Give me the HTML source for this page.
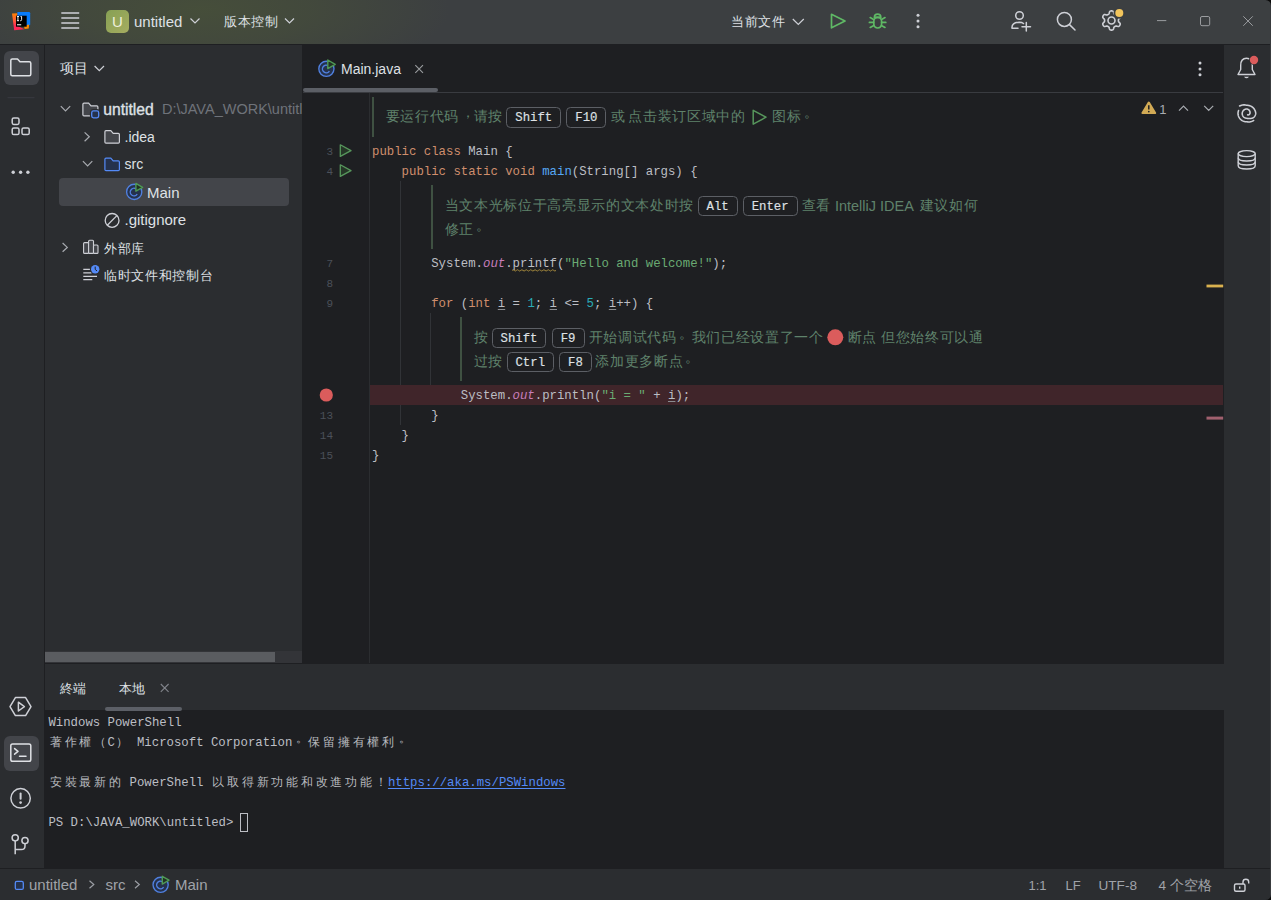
<!DOCTYPE html>
<html><head><meta charset="utf-8">
<style>
*{box-sizing:border-box;margin:0;padding:0}
html,body{width:1271px;height:900px;overflow:hidden;background:#1e1f22}
body{position:relative;font-family:"Liberation Sans",sans-serif;color:#dfe1e5;font-size:14px}
.a{position:absolute}
svg{position:absolute;overflow:visible}
.t{position:absolute;white-space:nowrap;line-height:1}
.mono{font-family:"Liberation Mono",monospace}
.c{font-size:12.33px;color:#bcbec4}
.k{color:#cf8e6d}.fn{color:#56a8f5}.sf{color:#c77dbb;font-style:italic}.s{color:#6aab73}.n{color:#2aacb8}
.u{text-decoration:underline;text-decoration-color:#8a8c90;text-underline-offset:2px}
.ln{font-size:11px;color:#4b5059}
.kbd{border:1.5px solid #5c5f65;border-radius:4.5px}
.kt{font-size:12.33px;color:#dfe1e5;-webkit-text-stroke:0.15px #dfe1e5}
.doc{color:#5f826b;font-size:13.6px;letter-spacing:0.67px}
.p{position:relative;top:-4px;left:2px}
.lat{letter-spacing:0;font-size:14.5px}
.term{font-size:12.33px;color:#bcbec4;white-space:pre}
.w{display:inline-block;width:14.76px;text-align:center;font-size:11.8px;color:#b8babf}
.lnk{color:#548af7;text-decoration:underline;text-underline-offset:2px}
.st{color:#a0a3a9}


</style></head><body>

<!-- TITLE BAR -->
<div class="a" style="left:0;top:0;width:1271px;height:44px;background:#3c3f41"></div>
<div class="a" style="left:0;top:0;width:700px;height:44px;background:radial-gradient(ellipse 250px 75px at 200px 10px,rgba(92,112,42,0.30) 0%,rgba(92,112,42,0.20) 45%,rgba(92,112,42,0) 100%)"></div>
<div class="a" style="left:0;top:44px;width:1271px;height:1px;background:#1e1f22"></div>
<!-- logo -->
<svg style="left:0;top:0" width="44" height="44">
 <defs><linearGradient id="lg1" x1="0" y1="0" x2="0" y2="1"><stop offset="0" stop-color="#ff8100"/><stop offset="0.45" stop-color="#ff5a3a"/><stop offset="0.75" stop-color="#fe2857"/><stop offset="1" stop-color="#fe2857"/></linearGradient></defs>
 <path d="M12 13.6 L17.6 13.2 L17.6 26 L24.6 29.2 L14.2 30.2 Z" fill="url(#lg1)"/>
 <path d="M17.4 12 H28.9 Q30.2 12 30.2 13.3 V24.8 L26.7 26.7 L17.4 17 Z" fill="#087cfa"/>
 <path d="M24 25.4 L29.1 24.6 L28.7 28.5 L24.6 29.1 Z" fill="#ff8a00"/>
 <rect x="16" y="15.7" width="10.7" height="11" fill="#000"/>
 <path d="M16.9 16.5 H19 M17.95 16.5 V20.7 M16.9 20.7 H19" stroke="#fff" stroke-width="0.95" fill="none"/>
 <path d="M20.5 16.5 H21.6 V19.7 Q21.6 20.7 20.6 20.7 H20.1" stroke="#fff" stroke-width="0.95" fill="none"/>
 <rect x="17" y="24" width="4.2" height="1.4" fill="#bdbdbd"/>
</svg>
<!-- hamburger -->
<svg style="left:0;top:0" width="100" height="44"><path d="M61.3 13 H79.2 M61.3 18 H79.2 M61.3 23 H79.2 M61.3 28 H79.2" stroke="#ced0d6" stroke-width="1.5"/></svg>
<!-- U badge -->
<div class="a" style="left:106px;top:10px;width:23px;height:23px;border-radius:5px;background:linear-gradient(135deg,#86a054,#a6ad60)"></div>
<div class="t" style="left:106px;top:14px;width:23px;text-align:center;font-size:15px;color:#eef0dc">U</div>
<div class="t" style="left:134px;top:13.5px;font-size:15px;color:#dfe1e5">untitled</div>
<svg style="left:0;top:0" width="300" height="44"><path d="M190.5 18.5 L195 23 L199.5 18.5" stroke="#ced0d6" stroke-width="1.2" fill="none"/><path d="M285 18.5 L289.5 23 L294 18.5" stroke="#ced0d6" stroke-width="1.2" fill="none"/></svg>
<div class="t" style="left:224px;top:15.3px;font-size:13px;letter-spacing:0.55px;color:#dfe1e5">版本控制</div>
<div class="t" style="left:731px;top:15.3px;font-size:13px;letter-spacing:0.55px;color:#dfe1e5">当前文件</div>
<svg style="left:0;top:0" width="1271" height="44">
 <path d="M792.8 19 L798.3 24.5 L803.8 19" stroke="#ced0d6" stroke-width="1.2" fill="none"/>
 <path d="M831.5 14.3 L845 21 L831.5 27.8 Z" stroke="#5fb865" stroke-width="1.7" stroke-linejoin="round" fill="none"/>
 <g stroke="#5fb865" stroke-width="1.7" fill="none" stroke-linecap="round">
  <path d="M874.4 17.4 a3.2 3.2 0 0 1 6.4 0 Z"/>
  <rect x="873.8" y="17.4" width="7.8" height="10.6" rx="3.9"/>
  <path d="M870.2 17.6 L873.6 19.4 M869.4 22.4 H873.6 M870.2 27.4 L873.8 25.4 M885 17.6 L881.6 19.4 M885.8 22.4 H881.6 M885 27.4 L881.4 25.4"/>
 </g>
 <circle cx="918" cy="15.2" r="1.5" fill="#ced0d6"/><circle cx="918" cy="21" r="1.5" fill="#ced0d6"/><circle cx="918" cy="26.8" r="1.5" fill="#ced0d6"/>
 <g stroke="#ced0d6" stroke-width="1.5" fill="none" stroke-linecap="round">
  <circle cx="1019.5" cy="15.5" r="3.8"/>
  <path d="M1012 28.2 H1018 M1012 28.2 Q1011.5 22.5 1019.3 22.2 Q1022 22.2 1023.5 23.5"/>
  <path d="M1026.3 22.6 V31 M1022 26.8 H1030.5"/>
  <circle cx="1064.4" cy="19.4" r="7"/>
  <path d="M1069.5 24.6 L1075 30"/>
 </g>
 <g transform="translate(1111.5 20.5)" stroke="#ced0d6" stroke-width="1.6" fill="none">
  <path d="M6.90 -0.00 L6.90 -0.30 L6.92 -0.61 L6.97 -0.92 L7.12 -1.26 L7.45 -1.65 L7.97 -2.14 L8.46 -2.67 L8.71 -3.17 L8.75 -3.62 L8.66 -4.04 L8.51 -4.43 L8.31 -4.80 L8.09 -5.15 L7.83 -5.48 L7.51 -5.76 L7.10 -5.96 L6.54 -5.99 L5.83 -5.83 L5.15 -5.63 L4.65 -5.54 L4.28 -5.58 L3.98 -5.69 L3.71 -5.83 L3.45 -5.98 L3.19 -6.13 L2.94 -6.29 L2.69 -6.50 L2.47 -6.79 L2.29 -7.28 L2.14 -7.97 L1.92 -8.66 L1.61 -9.13 L1.24 -9.39 L0.83 -9.52 L0.42 -9.58 L0.00 -9.60 L-0.42 -9.58 L-0.83 -9.52 L-1.24 -9.39 L-1.61 -9.13 L-1.92 -8.66 L-2.14 -7.97 L-2.29 -7.28 L-2.47 -6.79 L-2.69 -6.50 L-2.94 -6.29 L-3.19 -6.13 L-3.45 -5.98 L-3.71 -5.83 L-3.98 -5.69 L-4.28 -5.58 L-4.65 -5.54 L-5.15 -5.63 L-5.83 -5.83 L-6.54 -5.99 L-7.10 -5.96 L-7.51 -5.76 L-7.83 -5.48 L-8.09 -5.15 L-8.31 -4.80 L-8.51 -4.43 L-8.66 -4.04 L-8.75 -3.62 L-8.71 -3.17 L-8.46 -2.67 L-7.97 -2.14 L-7.45 -1.65 L-7.12 -1.26 L-6.97 -0.92 L-6.92 -0.61 L-6.90 -0.30 L-6.90 -0.00 L-6.90 0.30 L-6.92 0.61 L-6.97 0.92 L-7.12 1.26 L-7.45 1.65 L-7.97 2.14 L-8.46 2.67 L-8.71 3.17 L-8.75 3.62 L-8.66 4.04 L-8.51 4.43 L-8.31 4.80 L-8.09 5.15 L-7.83 5.48 L-7.51 5.76 L-7.10 5.96 L-6.54 5.99 L-5.83 5.83 L-5.15 5.63 L-4.65 5.54 L-4.28 5.58 L-3.98 5.69 L-3.71 5.83 L-3.45 5.98 L-3.19 6.13 L-2.94 6.29 L-2.69 6.50 L-2.47 6.79 L-2.29 7.28 L-2.14 7.97 L-1.92 8.66 L-1.61 9.13 L-1.24 9.39 L-0.83 9.52 L-0.42 9.58 L-0.00 9.60 L0.42 9.58 L0.83 9.52 L1.24 9.39 L1.61 9.13 L1.92 8.66 L2.14 7.97 L2.29 7.28 L2.47 6.79 L2.69 6.50 L2.94 6.29 L3.19 6.13 L3.45 5.98 L3.71 5.83 L3.98 5.69 L4.28 5.58 L4.65 5.54 L5.15 5.63 L5.83 5.83 L6.54 5.99 L7.10 5.96 L7.51 5.76 L7.83 5.48 L8.09 5.15 L8.31 4.80 L8.51 4.43 L8.66 4.04 L8.75 3.62 L8.71 3.17 L8.46 2.67 L7.97 2.14 L7.45 1.65 L7.12 1.26 L6.97 0.92 L6.92 0.61 L6.90 0.30 Z" stroke-linejoin="round"/>
  <circle r="3.5"/>
 </g>
 <circle cx="1119.3" cy="13" r="5.8" fill="#3c3f41"/>
 <circle cx="1119.3" cy="13" r="4" fill="#f2c55c"/>
 <g stroke="#9a9c9f" stroke-width="1" fill="none">
  <path d="M1157 20.6 H1166.3"/>
  <rect x="1200.5" y="16.5" width="9.2" height="9.2" rx="1.5"/>
  <path d="M1243.3 16.3 L1252.8 25.8 M1252.8 16.3 L1243.3 25.8"/>
 </g>
</svg>


<!-- LEFT STRIP -->
<div class="a" style="left:0;top:45px;width:44px;height:823px;background:#2b2d30"></div>
<div class="a" style="left:44px;top:45px;width:1px;height:823px;background:#1e1f22"></div>

<!-- PROJECT PANEL -->
<div class="a" style="left:45px;top:45px;width:257px;height:618px;background:#2b2d30"></div>
<div class="a" style="left:4px;top:50.5px;width:34.5px;height:34.5px;border-radius:6px;background:#43454a"></div>
<svg style="left:0;top:0" width="45" height="900">
 <g stroke="#dfe1e5" stroke-width="1.5" fill="none" stroke-linejoin="round">
  <path d="M10.8 60.5 Q10.8 59 12.3 59 H17.5 L20 61.8 H29.3 Q30.8 61.8 30.8 63.3 V74.3 Q30.8 75.8 29.3 75.8 H12.3 Q10.8 75.8 10.8 74.3 Z"/>
 </g>
 <path d="M7.5 97.7 H34.5" stroke="#393b40" stroke-width="1"/>
 <g stroke="#ced0d6" stroke-width="1.5" fill="none">
  <rect x="12.2" y="118" width="6.8" height="6.4" rx="1.6"/>
  <rect x="12.2" y="128" width="6.8" height="6.6" rx="1.6"/>
  <rect x="22" y="128" width="7.2" height="6.6" rx="1.6"/>
 </g>
 <circle cx="13.2" cy="172.3" r="1.7" fill="#ced0d6"/><circle cx="20.6" cy="172.3" r="1.7" fill="#ced0d6"/><circle cx="27.9" cy="172.3" r="1.7" fill="#ced0d6"/>
 <g stroke="#ced0d6" stroke-width="1.5" fill="none" stroke-linejoin="round">
  <path d="M15.4 697.6 H25.6 L31 706.6 L25.6 715.6 H15.4 L10 706.6 Z"/>
  <path d="M18.4 702.2 L24.4 706.6 L18.4 711 Z"/>
 </g>
</svg>
<div class="a" style="left:4px;top:736px;width:34.5px;height:34.5px;border-radius:6px;background:#43454a"></div>
<svg style="left:0;top:0" width="45" height="900">
 <g stroke="#dfe1e5" stroke-width="1.5" fill="none" stroke-linejoin="round" stroke-linecap="round">
  <rect x="10.8" y="744" width="20" height="17.2" rx="1.8"/>
  <path d="M14.6 748.6 L18 751.4 L14.6 754.2"/>
  <path d="M19.5 756.3 H26"/>
 </g>
 <g stroke="#ced0d6" stroke-width="1.5" fill="none" stroke-linecap="round">
  <circle cx="20.6" cy="798.3" r="9.7"/>
  <path d="M20.6 793.6 V798.8" stroke-width="2"/>
  <circle cx="15.2" cy="837.8" r="3.1"/>
  <circle cx="25" cy="840.6" r="3.1"/>
  <path d="M15.2 840.9 V854.2 M15.2 849.6 H21.3 Q25 849.6 25 846 V843.7" stroke-linecap="butt"/>
 </g>
 <circle cx="20.6" cy="802.6" r="1.3" fill="#ced0d6"/>
</svg>

<!-- project header & tree -->
<div class="t" style="left:60px;top:61px;font-size:14px;color:#dfe1e5">项目</div>
<svg style="left:0;top:0" width="303" height="300">
 <path d="M94.6 66 L99.3 70.7 L104 66" stroke="#ced0d6" stroke-width="1.2" fill="none"/>
 <g stroke="#a8abb0" stroke-width="1.2" fill="none">
  <path d="M60.8 106.2 L65.5 110.9 L70.2 106.2"/>
  <path d="M84.6 132.4 L89.3 136.8 L84.6 141.2"/>
  <path d="M82.9 161.2 L87.6 165.9 L92.3 161.2"/>
  <path d="M62.6 243 L67.3 247.4 L62.6 251.8"/>
 </g>
 <!-- root folder -->
 <path d="M82.9 104.3 Q82.9 103.2 84 103.2 H88.6 L91 105.9 H96.8 Q97.9 105.9 97.9 107 V114.7 Q97.9 115.8 96.8 115.8 H84 Q82.9 115.8 82.9 114.7 Z" stroke="#ced0d6" stroke-width="1.2" fill="#43454a"/>
 <rect x="91.7" y="110.9" width="7" height="7" rx="1.8" stroke="#2b2d30" stroke-width="3.6" fill="#25324d"/>
 <rect x="91.7" y="110.9" width="7" height="7" rx="1.8" stroke="#548af7" stroke-width="1.3" fill="#25324d"/>
 <!-- .idea folder -->
 <path d="M104.9 131.8 Q104.9 130.7 106 130.7 H110.8 L113.2 133.4 H118.3 Q119.4 133.4 119.4 134.5 V142.1 Q119.4 143.2 118.3 143.2 H106 Q104.9 143.2 104.9 142.1 Z" stroke="#ced0d6" stroke-width="1.2" fill="#43454a"/>
 <!-- src folder -->
 <path d="M104.9 159.3 Q104.9 158.2 106 158.2 H110.8 L113.2 160.9 H118.3 Q119.4 160.9 119.4 162 V169.6 Q119.4 170.7 118.3 170.7 H106 Q104.9 170.7 104.9 169.6 Z" stroke="#548af7" stroke-width="1.2" fill="#25324d"/>
</svg>
<div class="t" style="left:103.2px;top:102.2px;font-size:15.7px;-webkit-text-stroke:0.35px #dfe1e5;color:#dfe1e5">untitled</div>
<div class="t" style="left:162px;top:102px;font-size:14.5px;color:#6f737a;width:140px;overflow:hidden">D:\JAVA_WORK\untitled</div>
<div class="t" style="left:124.5px;top:129.5px;font-size:14px;color:#dfe1e5">.idea</div>
<div class="t" style="left:124.5px;top:157px;font-size:14px;color:#dfe1e5">src</div>
<div class="a" style="left:59px;top:178.3px;width:229.5px;height:27.3px;border-radius:4px;background:#43454a"></div>
<svg style="left:0;top:0" width="303" height="300">
 <circle cx="134.2" cy="191.9" r="7.6" stroke="#5080e0" stroke-width="1.35" fill="#25324d"/>
 <path d="M137.2 194.2 A3.8 3.8 0 1 1 136 188.8" stroke="#5080e0" stroke-width="1.4" fill="none"/>
 <path d="M135.9 183.4 L142.6 187.3 L135.9 191.2 Z" stroke="#4f9a55" stroke-width="1.4" stroke-linejoin="round" fill="#223225"/>
 <!-- gitignore -->
 <circle cx="112.1" cy="220.4" r="6.9" stroke="#ced0d6" stroke-width="1.3" fill="none"/>
 <path d="M107.3 225.2 L116.9 215.6" stroke="#ced0d6" stroke-width="1.3"/>
 <!-- library -->
 <g stroke="#ced0d6" stroke-width="1.1" fill="#43454a">
  <rect x="83.6" y="242.6" width="5" height="10.8" rx="1"/>
  <rect x="88.6" y="240.2" width="4.9" height="13.2" rx="1"/>
  <rect x="93.5" y="245" width="4.5" height="8.4" rx="1"/>
 </g>
 <!-- scratch -->
 <g stroke="#ced0d6" stroke-width="1.3">
  <path d="M83.3 269.3 H89.9 M83.3 272.9 H91.5 M83.3 276.3 H97 M83.3 279.7 H92.3"/>
 </g>
 <circle cx="95.2" cy="269.3" r="5" fill="#2b2d30"/>
 <circle cx="95.2" cy="269.3" r="4.2" fill="#548af7"/>
 <path d="M95.2 266.6 V269.4 L97 271" stroke="#1e1f22" stroke-width="1" fill="none"/>
</svg>
<div class="t" style="left:147px;top:184.5px;font-size:15px;color:#dfe1e5">Main</div>
<div class="t" style="left:124.5px;top:211.6px;font-size:15px;color:#dfe1e5">.gitignore</div>
<div class="t" style="left:104px;top:241.5px;font-size:13px;letter-spacing:0.5px;color:#dfe1e5">外部库</div>
<div class="t" style="left:104px;top:268.8px;font-size:13px;letter-spacing:0.68px;color:#dfe1e5">临时文件和控制台</div>
<!-- project scrollbar -->
<div class="a" style="left:45px;top:651px;width:258px;height:12px;background:#333438"></div>
<div class="a" style="left:45px;top:651.5px;width:230px;height:10.5px;background:#5a5c60"></div>


<!-- EDITOR -->
<div class="a" style="left:302px;top:45px;width:922px;height:618px;background:#1e1f22"></div>
<div class="a" style="left:303px;top:92px;width:920px;height:1px;background:#393b40"></div>
<!-- tab header -->
<svg style="left:0;top:0" width="1271" height="100">
 <circle cx="326.4" cy="68.8" r="7.6" stroke="#5080e0" stroke-width="1.35" fill="#25324d"/>
 <path d="M329.4 71.1 A3.8 3.8 0 1 1 328.2 65.7" stroke="#5080e0" stroke-width="1.4" fill="none"/>
 <path d="M327.8 60 L335.2 64.3 L327.8 68.6 Z" stroke="#4f9a55" stroke-width="1.4" stroke-linejoin="round" fill="#223225"/>
 <path d="M415.3 65.2 L423 72.9 M423 65.2 L415.3 72.9" stroke="#9a9c9f" stroke-width="1.1"/>
 <circle cx="1200" cy="63.1" r="1.5" fill="#ced0d6"/><circle cx="1200" cy="68.9" r="1.5" fill="#ced0d6"/><circle cx="1200" cy="74.7" r="1.5" fill="#ced0d6"/>
</svg>
<div class="t" style="left:341px;top:62px;font-size:14px;color:#dfe1e5">Main.java</div>
<div class="a" style="left:303px;top:88.3px;width:134.5px;height:4px;border-radius:2px;background:#5c5f66"></div>
<!-- gutter separator -->
<div class="a" style="left:369px;top:93px;width:1px;height:570px;background:#2b2d30"></div>
<!-- indent guides -->
<div class="a" style="left:400px;top:181px;width:1px;height:243.5px;background:#313337"></div>
<div class="a" style="left:430px;top:313px;width:1px;height:91.5px;background:#313337"></div>
<!-- breakpoint line -->
<div class="a" style="left:370px;top:384.5px;width:853px;height:20px;background:#40252a"></div>
<!-- doc bars -->
<div class="a" style="left:372px;top:96.5px;width:2px;height:40px;background:#3f5142"></div>
<div class="a" style="left:431px;top:184.5px;width:2px;height:64px;background:#3f5142"></div>
<div class="a" style="left:460px;top:316.8px;width:2px;height:64px;background:#3f5142"></div>
<svg style="left:0;top:0" width="1271" height="500">
 <path d="M340.3 144.8 L351 150.6 L340.3 156.4 Z" stroke="#57965c" stroke-width="1.3" stroke-linejoin="round" fill="#253627"/>
 <path d="M340.3 164.8 L351 170.6 L340.3 176.4 Z" stroke="#57965c" stroke-width="1.3" stroke-linejoin="round" fill="#253627"/>
 <circle cx="326.3" cy="395" r="6.6" fill="#db5c5c"/>
 <path d="M753.2 110.3 L766 117.2 L753.2 124.1 Z" stroke="#57965c" stroke-width="1.5" stroke-linejoin="round" fill="none"/>
 <circle cx="835.3" cy="337.3" r="8" fill="#db5c5c"/>
 <path d="M512 270.4 q1.1 -1.3 2.2 0 t2.2 0 t2.2 0 t2.2 0 t2.2 0 t2.2 0 t2.2 0 t2.2 0 t2.2 0 t2.2 0 t2.2 0 t2.2 0 t2.2 0 t2.2 0 t2.2 0 t2.2 0 t2.2 0 t2.2 0 t2.2 0 t2.2 0" stroke="#b3943f" stroke-width="0.9" fill="none"/>
 <!-- warning -->
 <path d="M1148.8 102.6 L1155.1 113 H1142.5 Z" fill="#d2aa55" stroke="#d2aa55" stroke-width="2.2" stroke-linejoin="round"/>
 <path d="M1148.8 105.2 V109.4" stroke="#1e1f22" stroke-width="1.5"/>
 <circle cx="1148.8" cy="111.6" r="0.85" fill="#1e1f22"/>
 <path d="M1179 110.6 L1183.5 106 L1188 110.6 M1204.2 105.8 L1208.7 110.4 L1213.2 105.8" stroke="#a8abb0" stroke-width="1.2" fill="none"/>
 <rect x="1206.5" y="284.6" width="16.7" height="2.8" fill="#d9b14f"/>
 <rect x="1206.5" y="416.6" width="16.7" height="3" fill="#a0606e"/>
</svg>
<div class="t" style="left:1159.2px;top:102.8px;font-size:13px;color:#a8abb0">1</div>
<div class="t mono ln" style="left:300px;top:147.07px;width:33px;text-align:right">3</div>
<div class="t mono ln" style="left:300px;top:167.07px;width:33px;text-align:right">4</div>
<div class="t mono ln" style="left:300px;top:259.07px;width:33px;text-align:right">7</div>
<div class="t mono ln" style="left:300px;top:279.07px;width:33px;text-align:right">8</div>
<div class="t mono ln" style="left:300px;top:299.07px;width:33px;text-align:right">9</div>
<div class="t mono ln" style="left:300px;top:411.07px;width:33px;text-align:right">13</div>
<div class="t mono ln" style="left:300px;top:431.07px;width:33px;text-align:right">14</div>
<div class="t mono ln" style="left:300px;top:451.07px;width:33px;text-align:right">15</div>
<div class="t mono c" style="left:372px;top:145.75px"><span class="k">public</span>&nbsp;<span class="k">class</span>&nbsp;Main&nbsp;{</div>
<div class="t mono c" style="left:372px;top:165.75px">&nbsp;&nbsp;&nbsp;&nbsp;<span class="k">public</span>&nbsp;<span class="k">static</span>&nbsp;<span class="k">void</span>&nbsp;<span class="fn">main</span>(String[]&nbsp;args)&nbsp;{</div>
<div class="t mono c" style="left:372px;top:257.75px">&nbsp;&nbsp;&nbsp;&nbsp;&nbsp;&nbsp;&nbsp;&nbsp;System.<span class="sf">out</span>.<span class="sq">printf</span>(<span class="s">"Hello&nbsp;and&nbsp;welcome!"</span>);</div>
<div class="t mono c" style="left:372px;top:297.75px">&nbsp;&nbsp;&nbsp;&nbsp;&nbsp;&nbsp;&nbsp;&nbsp;<span class="k">for</span>&nbsp;(<span class="k">int</span>&nbsp;<span class="u">i</span>&nbsp;=&nbsp;<span class="n">1</span>;&nbsp;<span class="u">i</span>&nbsp;&lt;=&nbsp;<span class="n">5</span>;&nbsp;<span class="u">i</span>++)&nbsp;{</div>
<div class="t mono c" style="left:372px;top:389.75px">&nbsp;&nbsp;&nbsp;&nbsp;&nbsp;&nbsp;&nbsp;&nbsp;&nbsp;&nbsp;&nbsp;&nbsp;System.<span class="sf">out</span>.println(<span class="s">"i&nbsp;=&nbsp;"</span>&nbsp;+&nbsp;<span class="u">i</span>);</div>
<div class="t mono c" style="left:372px;top:409.75px">&nbsp;&nbsp;&nbsp;&nbsp;&nbsp;&nbsp;&nbsp;&nbsp;}</div>
<div class="t mono c" style="left:372px;top:429.75px">&nbsp;&nbsp;&nbsp;&nbsp;}</div>
<div class="t mono c" style="left:372px;top:449.75px">}</div>
<div class="a kbd" style="left:506.2px;top:107.40px;width:55.099999999999966px;height:20.2px"></div><div class="t mono kt" style="left:506.2px;top:112.40px;width:55.099999999999966px;text-align:center">Shift</div>
<div class="a kbd" style="left:566.2px;top:107.40px;width:40.299999999999955px;height:20.2px"></div><div class="t mono kt" style="left:566.2px;top:112.40px;width:40.299999999999955px;text-align:center">F10</div>
<div class="a kbd" style="left:697.6px;top:195.80px;width:40.19999999999993px;height:20.2px"></div><div class="t mono kt" style="left:697.6px;top:200.80px;width:40.19999999999993px;text-align:center">Alt</div>
<div class="a kbd" style="left:742.7px;top:195.80px;width:54.89999999999998px;height:20.2px"></div><div class="t mono kt" style="left:742.7px;top:200.80px;width:54.89999999999998px;text-align:center">Enter</div>
<div class="a kbd" style="left:491.7px;top:328.00px;width:54.69999999999999px;height:20.2px"></div><div class="t mono kt" style="left:491.7px;top:333.00px;width:54.69999999999999px;text-align:center">Shift</div>
<div class="a kbd" style="left:551.5px;top:328.00px;width:33.10000000000002px;height:20.2px"></div><div class="t mono kt" style="left:551.5px;top:333.00px;width:33.10000000000002px;text-align:center">F9</div>
<div class="a kbd" style="left:506.5px;top:352.10px;width:47.5px;height:20.2px"></div><div class="t mono kt" style="left:506.5px;top:357.10px;width:47.5px;text-align:center">Ctrl</div>
<div class="a kbd" style="left:559.2px;top:352.10px;width:32.5px;height:20.2px"></div><div class="t mono kt" style="left:559.2px;top:357.10px;width:32.5px;text-align:center">F8</div>


<!-- RIGHT STRIP -->
<div class="a" style="left:1224px;top:45px;width:47px;height:823px;background:#2b2d30"></div>

<svg style="left:0;top:0" width="1271" height="900">
 <g stroke="#ced0d6" stroke-width="1.4" fill="none" stroke-linejoin="round" stroke-linecap="round">
  <path d="M1238 74.5 H1255 L1252.3 69.5 V65.5 Q1252.3 58.3 1246.5 58.3 Q1240.7 58.3 1240.7 65.5 V69.5 Z"/>
 </g>
 <path d="M1244 76.8 Q1246.5 79.8 1249 76.8 Z" fill="#ced0d6"/>
 <circle cx="1254" cy="60" r="5" fill="#2b2d30"/>
 <circle cx="1254" cy="60" r="4.2" fill="#db5c5c"/>
 <g stroke="#ced0d6" stroke-width="1.55" fill="none" stroke-linecap="round" stroke-linejoin="round"><path d="M1253.69 120.44 L1253.11 120.79 L1252.52 121.10 L1251.92 121.36 L1251.31 121.57 L1250.70 121.74 L1250.08 121.86 L1249.46 121.94 L1248.85 121.96 L1248.25 121.95 L1247.66 121.89 L1247.08 121.79 L1246.52 121.76 L1245.95 121.75 L1245.39 121.70 L1244.82 121.61 L1244.27 121.48 L1243.71 121.32 L1243.18 121.11 L1242.65 120.86 L1242.14 120.58 L1241.65 120.26 L1241.18 119.91 L1240.73 119.52 L1240.32 119.10 L1239.92 118.65 L1239.56 118.17 L1239.24 117.67 L1238.94 117.15 L1238.69 116.60 L1238.47 116.03 L1238.29 115.45 L1238.15 114.85 L1238.05 114.24 L1238.00 113.63 L1238.02 113.01 L1238.09 112.40 L1238.20 111.79 L1238.35 111.19 L1238.54 110.61"/><path d="M1239.54 106.02 L1240.22 105.69 L1240.91 105.41 L1241.61 105.19 L1242.31 105.03 L1243.00 104.92 L1243.69 104.87 L1244.36 104.87 L1245.03 104.92 L1245.67 105.01 L1246.28 105.16 L1246.88 105.34 L1247.46 105.35 L1248.03 105.38 L1248.61 105.45 L1249.18 105.57 L1249.75 105.73 L1250.30 105.92 L1250.84 106.15 L1251.37 106.43 L1251.87 106.73 L1252.36 107.08 L1252.82 107.45 L1253.25 107.86 L1253.66 108.30 L1254.03 108.77 L1254.38 109.27 L1254.68 109.79 L1254.96 110.33 L1255.19 110.89 L1255.39 111.47 L1255.54 112.06 L1255.65 112.66 L1255.73 113.27 L1255.70 113.88 L1255.52 114.48 L1255.31 115.05 L1255.06 115.60 L1254.78 116.13 L1254.46 116.62 L1254.10 117.07 L1253.61 117.43 L1253.10 117.74 L1252.58 117.99 L1252.06 118.20 L1251.54 118.35 L1251.03 118.45 L1250.52 118.51 L1250.02 118.52 L1249.57 118.52 L1249.17 118.58 L1248.77 118.60 L1248.39 118.59 L1248.01 118.55 L1247.65 118.49 L1247.30 118.39 L1246.97 118.28 L1246.64 118.25 L1246.33 118.22 L1246.01 118.18 L1245.69 118.11 L1245.39 118.02 L1245.08 117.90 L1244.79 117.77 L1244.51 117.62 L1244.23 117.45 L1243.97 117.26 L1243.73 117.05 L1243.50 116.82 L1243.28 116.58 L1243.08 116.32 L1242.90 116.05 L1242.74 115.77 L1242.60 115.48 L1242.48 115.18 L1242.38 114.87 L1242.30 114.55 L1242.24 114.23 L1242.21 113.91 L1242.20 113.58 L1242.22 113.25 L1242.26 112.93 L1242.32 112.61 L1242.40 112.29 L1242.51 111.98 L1242.63 111.68 L1242.78 111.39 L1242.95 111.11 L1243.13 110.84 L1243.34 110.58 L1243.56 110.34 L1243.80 110.12 L1244.05 109.91 L1244.32 109.72 L1244.60 109.55 L1244.89 109.40 L1245.19 109.27 L1245.49 109.16 L1245.81 109.08 L1246.13 109.01 L1246.45 108.97 L1246.78 108.95 L1247.11 109.00 L1247.42 109.10 L1247.72 109.22 L1248.01 109.36 L1248.28 109.52 L1248.53 109.70 L1248.77 109.89 L1248.99 110.09 L1249.19 110.31 L1249.37 110.54 L1249.53 110.77 L1249.67 111.01 L1249.79 111.26 L1249.88 111.51 L1249.96 111.76 L1250.02 112.01 L1250.06 112.26 L1250.07 112.51 L1250.07 112.76 L1250.05 112.99 L1250.02 113.23 L1249.96 113.45 L1249.89 113.66 L1249.78 113.86 L1249.65 114.05 L1249.52 114.21 L1249.37 114.36 L1249.21 114.50 L1249.05 114.61 L1248.88 114.71 L1248.72 114.79 L1248.55 114.85 L1248.38 114.89 L1248.21 114.92 L1248.05 114.93 L1247.89 114.92 L1247.74 114.90 L1247.60 114.86"/></g>
 <g stroke="#ced0d6" stroke-width="1.4" fill="none">
  <ellipse cx="1246.7" cy="153.6" rx="8.5" ry="3"/>
  <path d="M1238.2 153.6 V165.8 Q1238.2 169 1246.7 169 Q1255.2 169 1255.2 165.8 V153.6"/>
  <path d="M1238.2 157.8 Q1238.2 161 1246.7 161 Q1255.2 161 1255.2 157.8"/>
  <path d="M1238.2 161.8 Q1238.2 165 1246.7 165 Q1255.2 165 1255.2 161.8"/>
 </g>
</svg>


<!-- TERMINAL -->
<div class="a" style="left:45px;top:663px;width:1179px;height:47px;background:#2b2d30"></div><div class="a" style="left:45px;top:663px;width:1179px;height:1px;background:#1e1f22"></div>
<div class="a" style="left:45px;top:710px;width:1179px;height:158px;background:#1e1f22"></div>
<div class="t" style="left:60px;top:681.8px;font-size:13px;letter-spacing:0.3px;color:#dfe1e5">終端</div>
<div class="t" style="left:119px;top:681.8px;font-size:13px;letter-spacing:0.3px;color:#dfe1e5">本地</div>
<svg style="left:0;top:0" width="300" height="900"><path d="M160.8 684 L168.6 691.8 M168.6 684 L160.8 691.8" stroke="#80838a" stroke-width="1.1"/></svg>
<div class="a" style="left:105px;top:707px;width:77px;height:3.5px;border-radius:2px;background:#5c5f66"></div>
<div class="t mono term" style="left:48.4px;top:716.6px">Windows PowerShell</div>
<div class="t mono term" style="left:48.4px;top:736.6px"><span class="w">著</span><span class="w">作</span><span class="w">權</span><span class="w">（</span>C<span class="w">）</span> Microsoft Corporation<span class="w"><span class="p">。</span></span><span class="w">保</span><span class="w">留</span><span class="w">擁</span><span class="w">有</span><span class="w">權</span><span class="w">利</span><span class="w"><span class="p">。</span></span></div>
<div class="t mono term" style="left:48.4px;top:776.6px"><span class="w">安</span><span class="w">裝</span><span class="w">最</span><span class="w">新</span><span class="w">的</span> PowerShell <span class="w">以</span><span class="w">取</span><span class="w">得</span><span class="w">新</span><span class="w">功</span><span class="w">能</span><span class="w">和</span><span class="w">改</span><span class="w">進</span><span class="w">功</span><span class="w">能</span><span class="w">！</span><span class="lnk">https://aka.ms/PSWindows</span></div>
<div class="t mono term" style="left:48.4px;top:816.6px">PS D:\JAVA_WORK\untitled&gt; </div>
<div class="a" style="left:240px;top:812.8px;width:8.4px;height:19.4px;border:1.2px solid #bcbec4"></div>


<!-- STATUS -->
<div class="a" style="left:0;top:868px;width:1271px;height:32px;background:#2b2d30"></div>
<div class="a" style="left:0;top:868px;width:1271px;height:1px;background:#1e1f22"></div>
<svg style="left:0;top:0" width="1271" height="900">
 <rect x="15.3" y="881.4" width="8" height="8" rx="1.5" stroke="#548af7" stroke-width="1.3" fill="#25324d"/>
 <path d="M89.5 880.8 L93.8 884.5 L89.5 888.2 M135 880.8 L139.3 884.5 L135 888.2" stroke="#9a9da3" stroke-width="1.2" fill="none"/>
 <circle cx="160.6" cy="884.8" r="7.6" stroke="#5080e0" stroke-width="1.35" fill="#25324d"/>
 <path d="M163.6 887.1 A3.8 3.8 0 1 1 162.4 881.7" stroke="#5080e0" stroke-width="1.4" fill="none"/>
 <path d="M162.3 876.3 L169 880.2 L162.3 884.1 Z" stroke="#4f9a55" stroke-width="1.4" stroke-linejoin="round" fill="#223225"/>
 <g stroke="#ced0d6" stroke-width="1.4" fill="none">
  <rect x="1234.5" y="884" width="10.5" height="7.3" rx="1.5"/>
  <path d="M1243 884 V882 Q1243 879.3 1245.9 879.3 Q1248.7 879.3 1248.7 882 V883.5"/>
 </g>
 <path d="M1239.7 886.5 V888.8" stroke="#ced0d6" stroke-width="1.4"/>
</svg>
<div class="t st" style="left:29px;top:877px;font-size:15px">untitled</div>
<div class="t st" style="left:105.5px;top:877px;font-size:15px">src</div>
<div class="t st" style="left:175px;top:877px;font-size:15px">Main</div>
<div class="t st" style="left:1028.5px;top:879px;font-size:13px">1:1</div>
<div class="t st" style="left:1065.5px;top:879px;font-size:13px">LF</div>
<div class="t st" style="left:1098.5px;top:878.5px;font-size:13.6px">UTF-8</div>
<div class="t st" style="left:1158.5px;top:878.5px;font-size:13.6px">4 个空格</div>


<div class="t doc" style="left:385.6px;top:110.4px">要运行代码<span class="p">，</span>请按</div>
<div class="t doc" style="left:610.7px;top:110.4px">或</div>
<div class="t doc" style="left:628.4px;top:110.4px">点击装订区域中的</div>
<div class="t doc" style="left:772.2px;top:110.4px">图标<span class="p">。</span></div>
<div class="t doc" style="left:444.6px;top:198.9px">当文本光标位于高亮显示的文本处时按</div>
<div class="t doc" style="left:801.5px;top:198.9px">查看</div>
<div class="t doc" style="left:834.9px;top:198.9px"><span class="lat">IntelliJ IDEA</span></div>
<div class="t doc" style="left:919.7px;top:198.9px">建议如何</div>
<div class="t doc" style="left:444.6px;top:222.9px">修正<span class="p">。</span></div>
<div class="t doc" style="left:473.7px;top:330.9px">按</div>
<div class="t doc" style="left:588.8px;top:330.9px">开始调试代码<span class="p">。</span>我们已经设置了一个</div>
<div class="t doc" style="left:847.8px;top:330.9px">断点</div>
<div class="t doc" style="left:880.9px;top:330.9px">但您始终可以通</div>
<div class="t doc" style="left:473.7px;top:354.9px">过按</div>
<div class="t doc" style="left:595.4px;top:354.9px">添加更多断点<span class="p">。</span></div>
<div class="a" style="left:1270px;top:0;width:1px;height:900px;background:#393b3e"></div><svg style="left:0;top:0" width="1271" height="10"><path d="M1265.5 0 A5.5 5.5 0 0 1 1271 5.5 V0 Z" fill="#0a0a0a"/></svg><svg style="left:0;top:890px" width="1271" height="10"><path d="M1271 4.5 A5.5 5.5 0 0 1 1265.5 10 H1271 Z" fill="#0a0a0a"/></svg>
</body></html>
